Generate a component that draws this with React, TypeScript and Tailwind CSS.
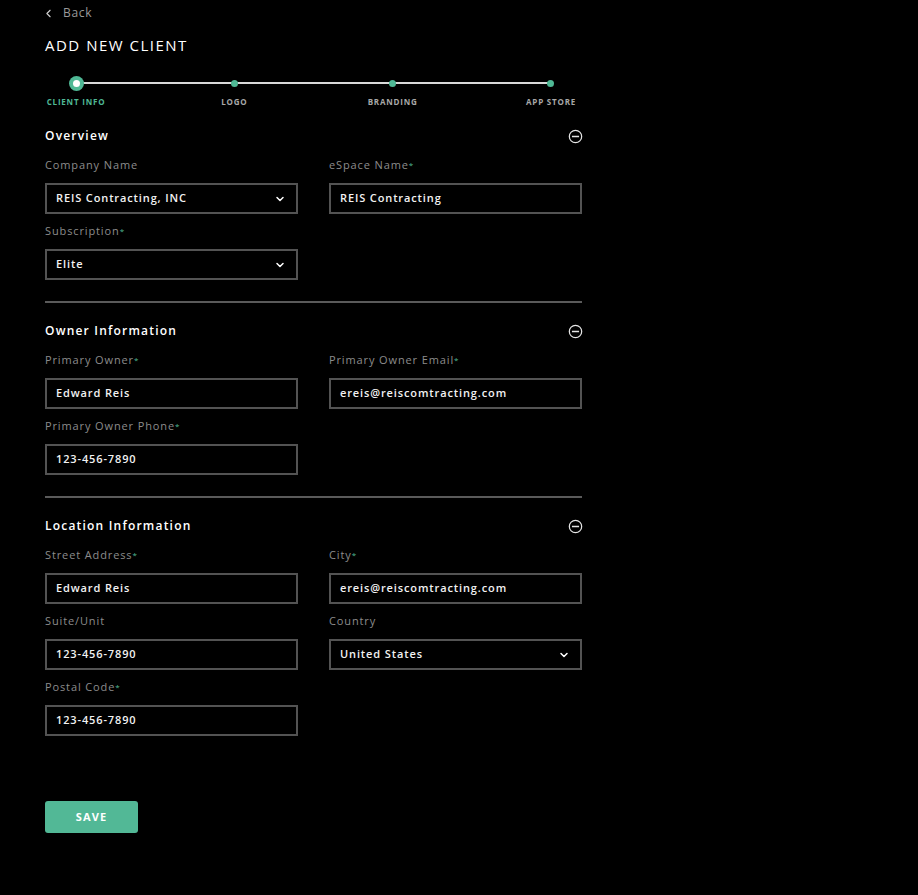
import { ChevronDown, ChevronLeft } from "lucide-react";

const font = { fontFamily: "'Open Sans', 'Liberation Sans', sans-serif" };

function Label({ text, required }: { text: string; required?: boolean }) {
  return (
    <p className="h-[25px] text-[11px] leading-[14px] tracking-[0.08em] text-[#8c8c8c]">
      {text}
      {required && <span className="text-[#4fb895] text-[8px] align-top">*</span>}
    </p>
  );
}

function Field({
  label,
  value,
  required,
  select,
}: {
  label: string;
  value: string;
  required?: boolean;
  select?: boolean;
}) {
  return (
    <div className="flex flex-col">
      <Label text={label} required={required} />
      <div className="h-[31px] border-2 border-[#535353] shadow-[inset_0_0_2px_#000] flex items-center justify-between pl-[9px] pr-[10px]">
        <span className="text-[11px] font-semibold tracking-[0.08em] text-[#f2f2f2]">{value}</span>
        {select && <ChevronDown size={12} strokeWidth={3} className="text-white" />}
      </div>
    </div>
  );
}

function MinusCircle() {
  return (
    <svg width="15" height="15" viewBox="0 0 16 16" fill="none" stroke="#e5e5e5" strokeWidth="1.3">
      <circle cx="8" cy="8" r="6.6" />
      <line x1="4.2" y1="8" x2="11.8" y2="8" strokeWidth="1.6" />
    </svg>
  );
}

function Section({ title, children }: { title: string; children: React.ReactNode }) {
  return (
    <section className="flex flex-col">
      <div className="h-[30px] flex items-center justify-between">
        <h2 className="text-[12px] font-semibold tracking-[0.1em] text-white">{title}</h2>
        <span className="-mr-[1px]">
          <MinusCircle />
        </span>
      </div>
      <div className="grid grid-cols-2 gap-x-[31px] gap-y-[10px] mt-[7px]">{children}</div>
    </section>
  );
}

const steps = ["CLIENT INFO", "LOGO", "BRANDING", "APP STORE"];

function Stepper() {
  return (
    <div className="relative mt-[21px] mx-[31px] flex justify-between">
      <div className="absolute left-0 right-0 top-[7px] h-[2px] bg-[#d9d9d9]" />
      {steps.map((s, i) => (
        <div key={s} className="relative w-0 flex flex-col items-center">
          <div className="h-[16px] flex items-center justify-center">
            {i === 0 ? (
              <span className="w-[15px] h-[15px] shrink-0 rounded-full bg-[#4fb895] flex items-center justify-center">
                <span className="w-[7px] h-[7px] rounded-full bg-white" />
              </span>
            ) : (
              <span className="w-[7px] h-[7px] shrink-0 rounded-full bg-[#4fb895]" />
            )}
          </div>
          <span
            className={`mt-[6px] whitespace-nowrap leading-[10px] text-[8px] font-bold tracking-[0.1em] ${
              i === 0 ? "text-[#4fb895]" : "text-[#a8a8a8]"
            }`}
          >
            {s}
          </span>
        </div>
      ))}
    </div>
  );
}

function Divider() {
  return <div className="mt-[21px] mb-[13px] h-[2px] bg-[#5a5a5a]" />;
}

export default function App() {
  return (
    <div className="min-h-[895px] bg-black text-white" style={font}>
      <div className="pl-[45px] pt-[5px] w-[582px] flex flex-col">
        <button className="flex items-center gap-[8px] h-[16px] text-[#9a9a9a] text-[12px] tracking-[0.06em] -ml-[3px]">
          <ChevronLeft size={13} strokeWidth={2} className="text-[#d0d0d0]" />
          Back
        </button>
        <h1 className="mt-[15px] h-[18px] text-[15px] font-medium tracking-[0.1em] text-white leading-[18px]">
          ADD NEW CLIENT
        </h1>
        <Stepper />

        <div className="mt-[14px] flex flex-col">
          <Section title="Overview">
            <Field label="Company Name" value="REIS Contracting, INC" select />
            <Field label="eSpace Name" value="REIS Contracting" required />
            <Field label="Subscription" value="Elite" required select />
          </Section>
          <Divider />
          <Section title="Owner Information">
            <Field label="Primary Owner" value="Edward Reis" required />
            <Field label="Primary Owner Email" value="ereis@reiscomtracting.com" required />
            <Field label="Primary Owner Phone" value="123-456-7890" required />
          </Section>
          <Divider />
          <Section title="Location Information">
            <Field label="Street Address" value="Edward Reis" required />
            <Field label="City" value="ereis@reiscomtracting.com" required />
            <Field label="Suite/Unit" value="123-456-7890" />
            <Field label="Country" value="United States" select />
            <Field label="Postal Code" value="123-456-7890" required />
          </Section>
        </div>

        <button className="mt-[65px] w-[93px] h-[32px] rounded-[3px] bg-[#52b896] text-white text-[11px] font-bold tracking-[0.1em]">
          SAVE
        </button>
      </div>
    </div>
  );
}
